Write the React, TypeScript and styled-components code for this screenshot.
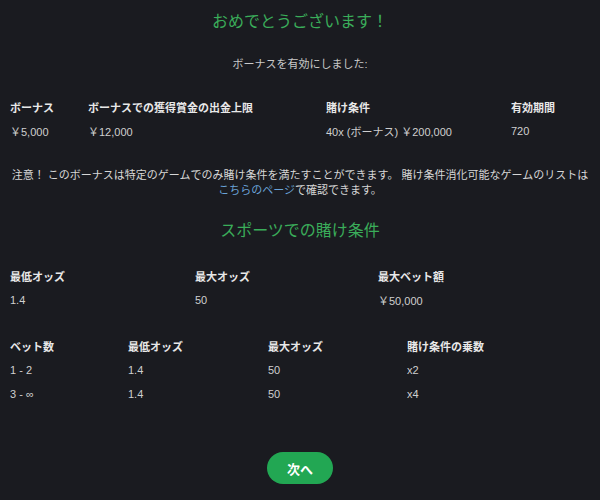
import styled, { createGlobalStyle } from 'styled-components';

const GlobalStyle = createGlobalStyle`
    html, body {
        margin: 0;
        padding: 0;
        background: #1a1b20;
    }
    body {
        font-family: "Liberation Sans", "Noto Sans CJK JP", sans-serif;
        color: #d4d4d4;
    }
`;

interface Column {
    label: string
    width: string
}

const bonusCols: Column[] = [
    { label: 'ボーナス', width: '78px' },
    { label: 'ボーナスでの獲得賞金の出金上限', width: '238px' },
    { label: '賭け条件', width: '185px' },
    { label: '有効期間', width: '1fr' },
];

const oddsCols: Column[] = [
    { label: '最低オッズ', width: '185px' },
    { label: '最大オッズ', width: '183px' },
    { label: '最大ベット額', width: '1fr' },
];

const betCols: Column[] = [
    { label: 'ベット数', width: '118px' },
    { label: '最低オッズ', width: '140px' },
    { label: '最大オッズ', width: '139px' },
    { label: '賭け条件の乗数', width: '1fr' },
];

const DataTable = ({ columns, rows }: { columns: Column[], rows: string[][] }) => {
    const template = columns.map(c => c.width).join(' ');
    return (
        <Table $cols={template}>
            {columns.map(c => <HeadCell key={c.label}>{c.label}</HeadCell>)}
            {rows.map((row, i) =>
                row.map((cell, j) => <Cell key={`${i}-${j}`}>{cell}</Cell>)
            )}
        </Table>
    );
};

export default function App() {
    return (
        <>
            <GlobalStyle />
            <Page>
                <Title>おめでとうございます！</Title>
                <Subtitle>ボーナスを有効にしました:</Subtitle>
                <Section $top={23}>
                    <DataTable
                        columns={bonusCols}
                        rows={[['￥5,000', '￥12,000', '40x (ボーナス) ￥200,000', '720']]}
                    />
                </Section>
                <Notice>
                    注意！ このボーナスは特定のゲームでのみ賭け条件を満たすことができます。 賭け条件消化可能なゲームのリストは
                    <br />
                    <Link href="#">こちらのページ</Link>で確認できます。
                </Notice>
                <SectionTitle>スポーツでの賭け条件</SectionTitle>
                <Section $top={21}>
                    <DataTable columns={oddsCols} rows={[['1.4', '50', '￥50,000']]} />
                </Section>
                <Section $top={22}>
                    <DataTable
                        columns={betCols}
                        rows={[
                            ['1 - 2', '1.4', '50', 'x2'],
                            ['3 - ∞', '1.4', '50', 'x4'],
                        ]}
                    />
                </Section>
                <Footer>
                    <NextButton>次へ</NextButton>
                </Footer>
            </Page>
        </>
    );
}

const Page = styled.main`
    display: flex;
    flex-direction: column;
    padding: 10px 10px 0;
    width: 600px;
    height: 500px;
    box-sizing: border-box;
    overflow: hidden;
`;

const Title = styled.h2`
    margin: 0;
    text-align: center;
    font-size: 16px;
    line-height: 24px;
    font-weight: 400;
    color: #3aad5a;
`;

const SectionTitle = styled(Title)`
    margin-top: 21px;
`;

const Subtitle = styled.p`
    margin: 22px 0 0;
    text-align: center;
    font-size: 11px;
    line-height: 16px;
    color: #c9c9c9;
`;

const Section = styled.div<{ $top: number }>`
    margin-top: ${({ $top }) => $top}px;
`;

const Table = styled.div<{ $cols: string }>`
    display: grid;
    grid-template-columns: ${({ $cols }) => $cols};
    grid-auto-rows: 24px;
    align-items: center;
    font-size: 11px;
`;

const HeadCell = styled.div`
    font-weight: 700;
    color: #e8e8e8;
    white-space: nowrap;
`;

const Cell = styled.div`
    color: #cfcfcf;
    white-space: nowrap;
`;

const Notice = styled.p`
    margin: 25px -6px 0;
    text-align: center;
    font-size: 11px;
    line-height: 15px;
    color: #d6d6d6;
    white-space: nowrap;
`;

const Link = styled.a`
    color: #6aa3d8;
    text-decoration: none;
`;

const Footer = styled.div`
    display: flex;
    justify-content: center;
    margin-top: 46px;
`;

const NextButton = styled.button`
    width: 66px;
    height: 32px;
    border: none;
    border-radius: 16px;
    background: #22a753;
    color: #ffffff;
    font-family: "Liberation Sans", "Noto Sans CJK JP", sans-serif;
    font-size: 13px;
    font-weight: 700;
    cursor: pointer;
`;
